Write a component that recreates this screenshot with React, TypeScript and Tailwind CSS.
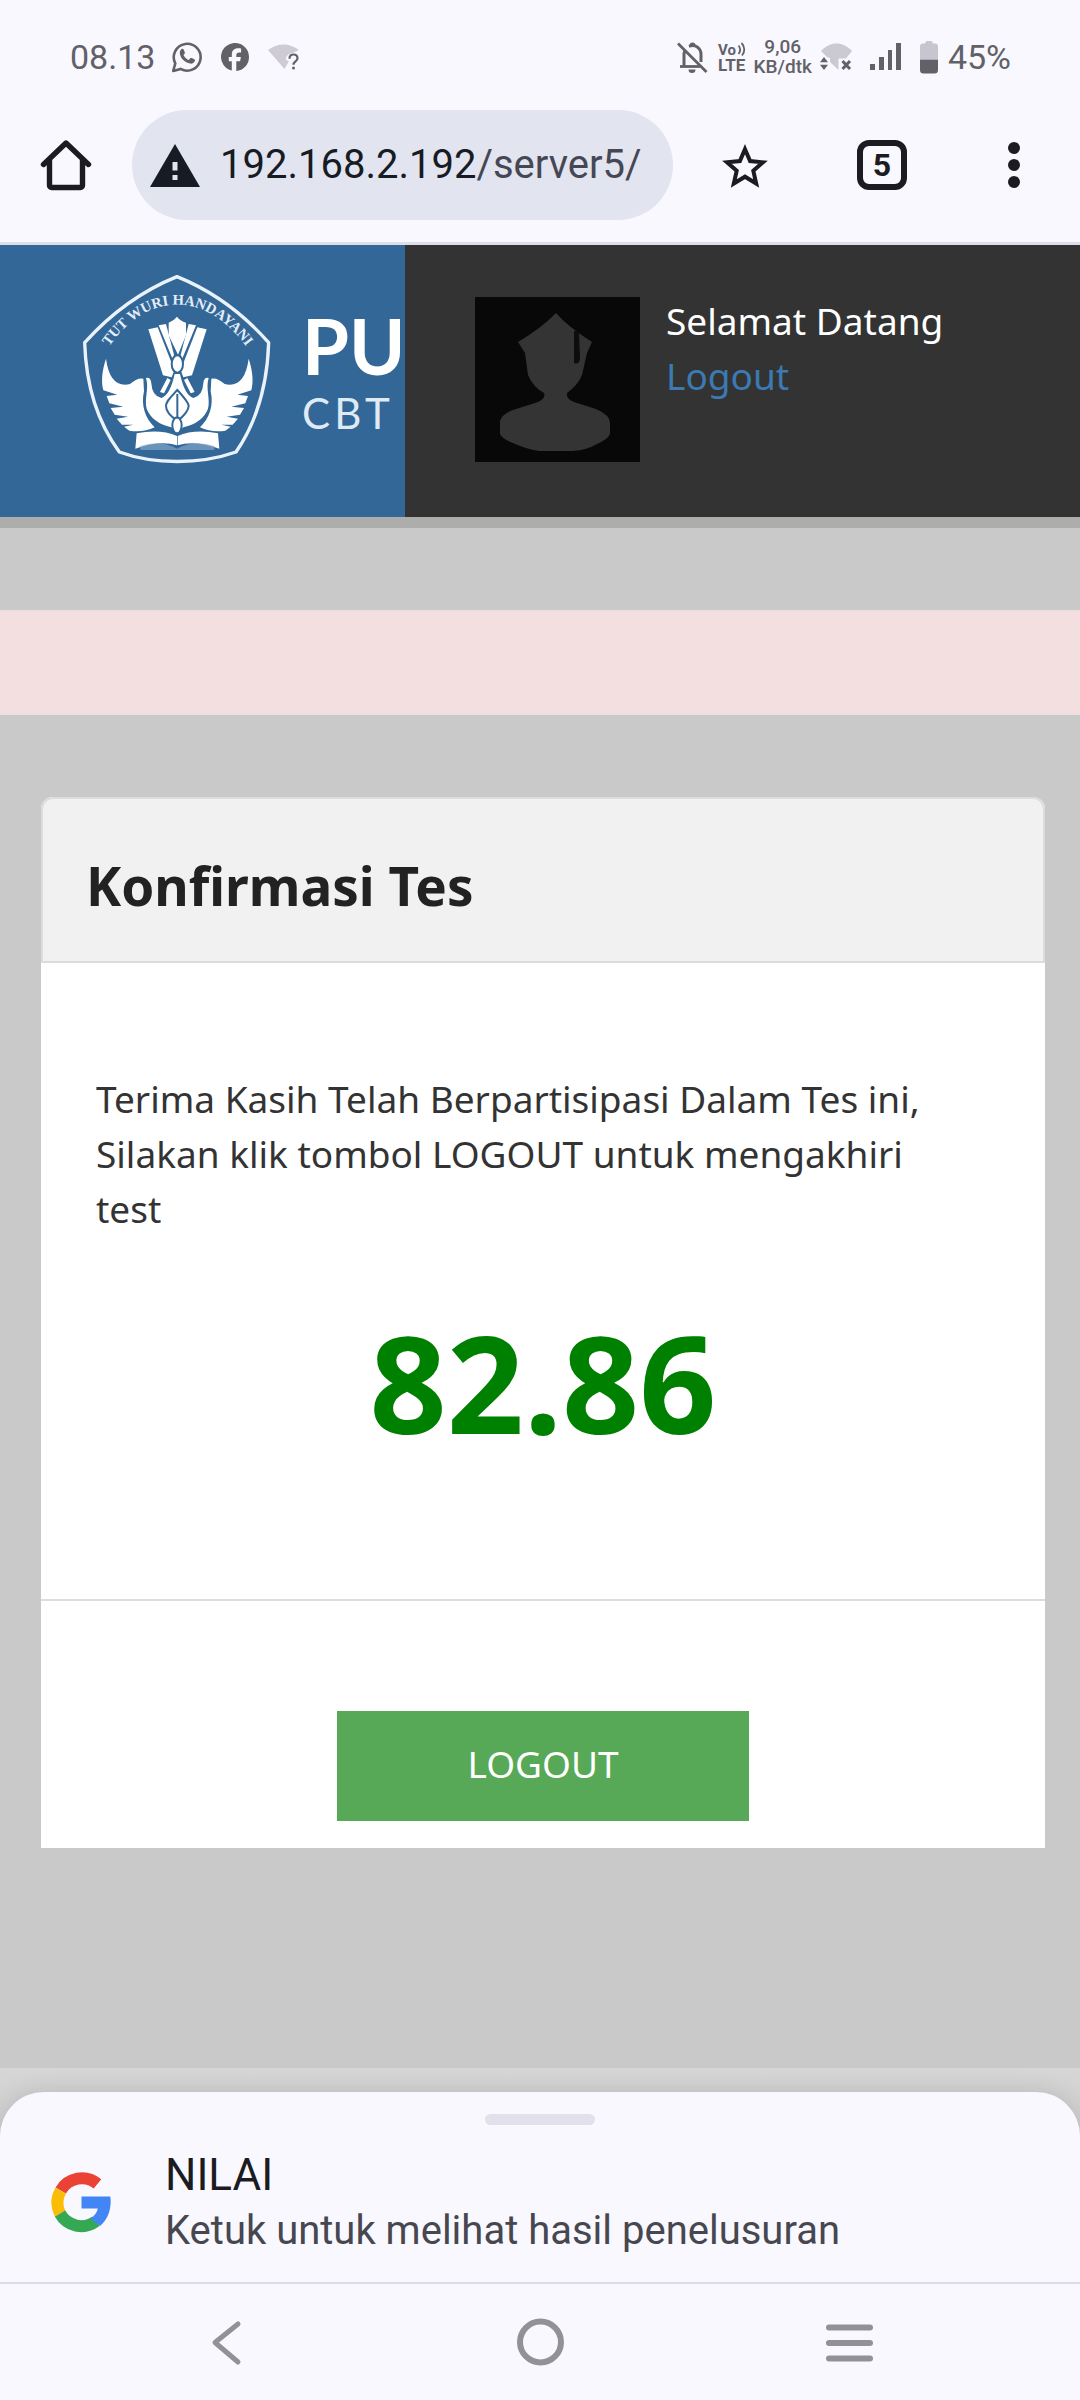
import type { ReactNode } from "react";

/* ---------- status bar icons ---------- */

function WhatsAppIcon() {
  return (
    <svg viewBox="0 0 32 32" className="size-8" fill="none" aria-label="WhatsApp">
      <path
        d="M2.2 30 L4.3 22.4 A13.4 13.4 0 1 1 9.6 27.9 Z"
        stroke="#626168"
        strokeWidth="2.6"
        strokeLinejoin="round"
      />
      <path
        d="M10.3 8.2c.6-.6 1.9-.7 2.3.2l1.2 2.9c.2.5.1 1-.2 1.4l-1.1 1.3c1.2 2.4 2.9 4 5.3 5l1.5-1.7c.3-.4.8-.5 1.3-.3l2.7 1.3c.6.3.8.8.6 1.5-.6 2.1-2.6 3.2-4.7 2.8-5.4-1-9.5-5-10.3-9.8-.3-1.9.1-3.5 1.4-4.6z"
        fill="#626168"
      />
    </svg>
  );
}

function FacebookIcon() {
  return (
    <svg viewBox="0 0 28 28" className="size-7" aria-label="Facebook">
      <path
        d="M28 14a14 14 0 1 0-17.2 13.6V18.2H7.8V14h3v-2c0-4.6 2.2-6.7 6.6-6.7.8 0 2.1.1 2.7.3v3.900h-1.8c-2.2 0-3 .8-3 2.9V14h4.6l-.8 4.2h-3.8V28A14 14 0 0 0 28 14z"
        fill="#626168"
      />
    </svg>
  );
}

function WifiUnknownIcon() {
  return (
    <svg viewBox="0 0 36 28" className="h-7 w-9" aria-label="Wi-Fi tanpa koneksi">
      <path d="M1 7C10-.5 23-.5 32 7L26 10c-4 0-7.500 3-7 7l3 1-4.500 8z" fill="#cfcbd6" />
      <path
        d="M22.500 15.800c0-2.700 1.600-4.300 4-4.300s4 1.500 4 3.700c0 3.200-4 3.300-4 6.600"
        stroke="#626168"
        strokeWidth="2.2"
        fill="none"
      />
      <circle cx="26.5" cy="25" r="1.5" fill="#626168" />
    </svg>
  );
}

function BellOffIcon() {
  return (
    <svg viewBox="0 0 32 32" className="size-8" fill="none" aria-label="Senyap">
      <path d="M8 25V13.500c0-1.300.3-2.400.8-3.500M13 5.300c6-2.300 12 1.500 12 8.200V21" stroke="#626168" strokeWidth="3" />
      <path d="M13.500 4.500a3 3 0 0 1 6 0z" fill="#626168" />
      <path d="M4 25.500H24" stroke="#626168" strokeWidth="2.8" />
      <path d="M12.500 28.500h7a3.500 3.500 0 0 1-7 0z" fill="#626168" />
      <path d="M2 2.500 30.500 31" stroke="#626168" strokeWidth="2.8" />
    </svg>
  );
}

function VolteIcon() {
  return (
    <svg viewBox="0 0 28 30" className="h-[30px] w-7 overflow-visible" aria-label="VoLTE">
      <g fontFamily="Roboto, sans-serif" fontWeight="700" fill="#626168">
        <text x="0" y="13" fontSize="15">Vo</text>
        <text x="0" y="29" fontSize="17">LTE</text>
      </g>
      <g fill="none" stroke="#626168" strokeWidth="1.8">
        <path d="M20.500 3.500c2 2.500 2 6 0 8.500" />
        <path d="M23.500 1c3.600 3.500 3.600 9 .5 12.500" />
      </g>
    </svg>
  );
}

function WifiOffIcon() {
  return (
    <svg viewBox="0 0 34 30" className="h-[30px] w-[34px]" aria-label="Wi-Fi terputus">
      <path d="M1 9C10-1 23-1 32 9l-6 7.500h-7.500V28L10 20V16L7 15z" fill="#cbc9d2" />
      <path d="M4 15l4 5.300H0zM4 28l4-5.300H0z" fill="#626168" />
      <path d="M22.500 19l7.500 8M30 19l-7.500 8" stroke="#626168" strokeWidth="3" />
    </svg>
  );
}

function SignalIcon() {
  return (
    <svg viewBox="0 0 32 28" className="h-7 w-8" fill="#626168" aria-label="Sinyal">
      <rect x="0" y="21" width="5" height="6" />
      <rect x="9" y="14" width="5" height="13" />
      <rect x="18" y="7" width="4" height="20" />
      <rect x="26" y="0" width="5" height="27" />
    </svg>
  );
}

function BatteryIcon() {
  return (
    <svg viewBox="0 0 18 34" className="h-[34px] w-[18px]" aria-label="Baterai">
      <path d="M0 19V6.500Q0 3.500 3 3.500H5Q5.500 1 7 1h4q1.500 0 2 2.500h2q3 0 3 3V19z" fill="#c7c5cf" />
      <path d="M0 19.500h18V30q0 3.500-3.500 3.500h-11Q0 33.500 0 30z" fill="#626168" />
    </svg>
  );
}

/* ---------- browser bar icons ---------- */

function HomeIcon() {
  return (
    <svg viewBox="0 0 52 52" className="size-[52px]" fill="none" stroke="#1b1b21" strokeWidth="5.4" strokeLinecap="round" strokeLinejoin="round">
      <path d="M3.500 25.500 26 4l22.500 21.500M9.500 21v25.500a2 2 0 0 0 2 2h29a2 2 0 0 0 2-2V21" />
    </svg>
  );
}

function WarningIcon() {
  return (
    <svg viewBox="0 0 50 43" className="h-[43px] w-[50px]" aria-label="Tidak aman">
      <path
        fillRule="evenodd"
        d="M25 0 50 43H0zM22.500 18v8.500h5V18zM22.500 31v5h5v-5z"
        fill="#171b24"
      />
    </svg>
  );
}

function StarIcon() {
  return (
    <svg viewBox="0 0 48 46" className="h-[46px] w-12" fill="none" stroke="#1b1b21" strokeWidth="4">
      <path d="M24 5.200 29.100 17.100 42 18.300 32.300 26.800 35.200 39.500 24 32.700 12.800 39.500 15.700 26.800 6 18.300 18.900 17.100z" />
    </svg>
  );
}

/* ---------- site graphics ---------- */

function Emblem() {
  return (
    <svg viewBox="0 0 582 582" className="size-[194px] shrink-0" aria-label="Tut Wuri Handayani">
      <defs>
        <path id="motto" d="M88 222C150 135 220 98 291 98S432 135 498 222" />
      </defs>
      <path
        d="M291 14C380 50 478 112 566 212C562 340 530 450 468 540C360 578 222 578 118 540C52 450 18 340 14 212C104 112 202 50 291 14z"
        fill="none"
        stroke="#eaf3fb"
        strokeWidth="10"
        strokeLinejoin="round"
      />
      <text fontFamily="Liberation Serif, serif" fontWeight="700" fontSize="44" fill="#e4eef8" textAnchor="middle">
        <textPath href="#motto" startOffset="50%">TUT WURI HANDAYANI</textPath>
      </text>
      <g fill="#fff">
        {/* torch bundle */}
        <path d="M205 172l28-6 50 128-8 22-26-6z" />
        <path d="M236 160l22-4 24 92-4 14z" />
        <path d="M266 152Q282 146 291 134Q300 146 318 152V190L294 248L266 190z" />
        <path d="M348 160l-22-4-24 92 4 14z" />
        <path d="M380 172l-28-6-50 128 8 22 26-6z" />
        {/* wings */}
        <path d="M78 260C68 290 62 325 70 355L112 368 80 372 88 394 130 404 92 408 104 428 144 434 110 440 126 458 160 458 132 464 148 476Q190 482 224 466C196 440 182 400 192 358L190 320Q172 316 150 336Q90 350 78 260z" />
        <path d="M506 260C516 290 522 325 514 355L472 368 504 372 496 394 454 404 492 408 480 428 440 434 474 440 458 458 424 458 452 464 436 476Q394 482 360 466C388 440 402 400 392 358L394 320Q412 316 434 336Q494 350 506 260z" />
        {/* body */}
        <path d="M198 318Q212 314 214 334Q216 372 244 378Q270 370 284 306H300Q314 370 340 378Q368 372 370 334Q372 314 386 318C376 350 392 380 384 410Q368 452 310 466L292 482L274 466Q216 452 200 410C192 380 208 350 198 318z" />
        <path d="M262 318l10 6-20 40-12-4zM322 318l-10 6 20 40 12-4z" />
        {/* open book */}
        <path d="M170 484Q240 470 291 492V520Q240 504 166 530z" />
        <path d="M414 484Q344 470 293 492V520Q344 504 418 530z" />
      </g>
      <g fill="#fff" stroke="#326798" strokeWidth="6">
        <ellipse cx="292" cy="276" rx="17" ry="26" />
        <path d="M292 354C314 378 326 392 326 402S314 432 292 446C270 432 258 416 258 402S270 378 292 354z" />
        <ellipse cx="291" cy="460" rx="14" ry="24" />
        <path d="M292 366V440" />
      </g>
      <path d="M180 522Q240 502 291 530Q344 502 404 522L402 534H182z" fill="#8fb1d1" opacity="0.6" />
    </svg>
  );
}

function Avatar() {
  return (
    <svg viewBox="0 0 165 165" className="mt-1 size-[165px] shrink-0" role="img" aria-label="Foto peserta">
      <rect width="165" height="165" fill="#080808" />
      <path
        d="M81 16Q92 29 117 45L112 56 107 78Q103 88 92 96Q91 102 99 105L121 112Q135 118 135 126V137Q133 142 122 147Q112 153 98 154H64Q48 151 38 146Q27 142 25 137V124Q27 117 38 113L63 105Q71 101 69 96Q58 90 53 78L50 56 43 45Q68 30 81 16z"
        fill="#343434"
      />
      <path d="M99 34h5l1 28q-1 6-6 4z" fill="#0d0d0d" />
    </svg>
  );
}

function GoogleLogo() {
  return (
    <svg viewBox="0 0 60 62" className="h-[62px] w-[60px]" fill="none" aria-label="Google">
      <path d="M9.700 19.600A24.500 24.500 0 0 1 46.500 12.800" stroke="#ea4335" strokeWidth="12" />
      <path d="M9 42.500A24.500 24.500 0 0 1 9.700 19.600" stroke="#fbbc05" strokeWidth="12" />
      <path d="M45 50.300A24.500 24.500 0 0 1 9 42.500" stroke="#34a853" strokeWidth="12" />
      <path d="M30.500 25.500H59.300C61 37 57 48.500 49 55L39.500 47.500C43.500 45 46 41.500 46.800 37.500H30.500z" fill="#4285f4" />
    </svg>
  );
}

/* ---------- page parts ---------- */

function StatusBar() {
  return (
    <div className="flex h-[110px] items-center justify-between pt-1 pr-[69px] pl-[70px] text-[34px] text-[#626168]">
      <div className="flex items-center">
        <span className="mr-4">08.13</span>
        <WhatsAppIcon />
        <span className="ml-[18px]"><FacebookIcon /></span>
        <span className="ml-[18px]"><WifiUnknownIcon /></span>
      </div>
      <div className="flex items-center">
        <BellOffIcon />
        <span className="ml-2.5"><VolteIcon /></span>
        <span className="ml-2 text-center text-[19px] leading-5 font-medium">
          9,06
          <br />
          KB/dtk
        </span>
        <span className="ml-2"><WifiOffIcon /></span>
        <span className="ml-4"><SignalIcon /></span>
        <span className="ml-[18px]"><BatteryIcon /></span>
        <span className="ml-2.5">45%</span>
      </div>
    </div>
  );
}

function BrowserBar() {
  return (
    <div className="flex h-[135px] items-start border-b-3 border-[#dcdfe9] pr-[60px] pl-10">
      <button type="button" aria-label="Beranda" className="flex h-[110px] items-center">
        <HomeIcon />
      </button>
      <div className="ml-10 flex h-[110px] flex-1 items-center rounded-full bg-[#e2e4f0] pl-[18px]">
        <WarningIcon />
        <a href="#server5" className="ml-5 text-[40px] text-[#454854]">
          <span className="text-[#171b24]">192.168.2.192</span>/server5/
        </a>
      </div>
      <button type="button" aria-label="Tandai" className="ml-12 flex h-[110px] items-center pt-1">
        <StarIcon />
      </button>
      <button type="button" aria-label="Tab terbuka" className="ml-[88px] flex h-[110px] items-center">
        <span className="flex size-[50px] items-center justify-center rounded-xl border-6 border-[#1b1b21] text-[32px] leading-none font-bold text-[#1b1b21]">
          5
        </span>
      </button>
      <button type="button" aria-label="Menu" className="ml-[101px] flex h-[110px] w-3 flex-col items-center justify-center gap-[5px]">
        <span className="size-3 rounded-full bg-[#1b1b21]" />
        <span className="size-3 rounded-full bg-[#1b1b21]" />
        <span className="size-3 rounded-full bg-[#1b1b21]" />
      </button>
    </div>
  );
}

function SiteHeader() {
  return (
    <header className="flex h-[283px] border-b-11 border-[#adadab] bg-[#333333]">
      <div className="flex w-3/8 overflow-hidden bg-[#326798] pt-[27px] pl-20 font-['Lato',sans-serif] text-white">
        <Emblem />
        <div className="ml-7 pt-9">
          <div className="text-[76px] leading-[76px] font-bold">PU</div>
          <div className="mt-2 text-[42px] leading-[42px] tracking-widest text-[#dfeaf5]">CBT</div>
        </div>
      </div>
      <div className="flex flex-1 gap-[26px] pt-12 pl-[70px] text-[37px] leading-[55px]">
        <Avatar />
        <div className="flex flex-col text-white">
          <span>Selamat Datang</span>
          <a href="#logout" className="text-[#3c7ab2]">Logout</a>
        </div>
      </div>
    </header>
  );
}

function ResultCard() {
  return (
    <section className="mt-[82px] mr-[35px] ml-[41px] rounded-t-xl bg-white">
      <div className="rounded-t-xl border-2 border-[#dcdcdc] bg-[#f1f1f1] px-[43px] pt-[52px] pb-10">
        <h1 className="text-[53px] leading-[70px] font-bold text-[#222222]">Konfirmasi Tes</h1>
      </div>
      <div className="border-b-2 border-[#dddddd] px-[55px] pt-[108px] pb-[117px]">
        <p className="pr-[55px] text-[37px] leading-[55px] text-[#333333]">
          Terima Kasih Telah Berpartisipasi Dalam Tes ini, Silakan klik tombol LOGOUT untuk mengakhiri test
        </p>
        <p className="mt-[46px] text-center text-[135px] leading-[200px] font-bold text-[#008000]">82.86</p>
      </div>
      <div className="flex justify-center pt-[110px] pb-[27px]">
        <button type="button" className="h-[110px] w-[412px] bg-[#57a957] pb-1 text-[37px] text-white">
          LOGOUT
        </button>
      </div>
    </section>
  );
}

function SearchSheet() {
  return (
    <div className="bg-linear-to-b from-[#d6d6d6] to-[#bdbdbd] pt-6">
      <div className="flex h-[192px] flex-col rounded-t-[44px] border-b-2 border-[#dddce5] bg-[#f9f8ff] shadow-[0_0_24px_rgba(0,0,0,0.12)]">
        <div className="mx-auto mt-[22px] h-[11px] w-[110px] rounded-full bg-[#e2e0eb]" />
        <button type="button" className="mt-5 flex items-center pl-[51px] text-left">
          <GoogleLogo />
          <span className="ml-[54px] flex flex-col pt-0.5">
            <span className="text-[44px] leading-[56px] text-[#1b1b21]">NILAI</span>
            <span className="text-[40px] leading-[56px] text-[#47474f]">Ketuk untuk melihat hasil penelusuran</span>
          </span>
        </button>
      </div>
    </div>
  );
}

function NavButton({ label, children }: { label: string; children: ReactNode }) {
  return (
    <button type="button" aria-label={label} className="flex w-[310px] items-center justify-center">
      <svg viewBox="0 0 50 50" className="size-[50px]" fill="none" stroke="#929198" strokeWidth="6" strokeLinecap="round">
        {children}
      </svg>
    </button>
  );
}

function NavBar() {
  return (
    <nav className="flex h-[116px] justify-center bg-[#f9f8ff]">
      <NavButton label="Kembali">
        <path d="M33 7 10 25.500 33 45" strokeWidth="5" strokeLinejoin="round" />
      </NavButton>
      <NavButton label="Layar utama">
        <circle cx="25.5" cy="25" r="20.5" />
      </NavButton>
      <NavButton label="Aplikasi terbaru">
        <path d="M4 10.500H45M4 26H45M4 41.500H45" />
      </NavButton>
    </nav>
  );
}

export default function App() {
  return (
    <div className="flex min-h-screen flex-col bg-[#c9c9c9] font-['Roboto',sans-serif]">
      <div className="bg-[#f9f8ff]">
        <StatusBar />
        <BrowserBar />
      </div>
      <main className="flex-1 font-['Noto_Sans',sans-serif]">
        <SiteHeader />
        <div role="alert" className="mt-[82px] h-[105px] border-y-2 border-[#eedfdf] bg-[#f4dfe0]" />
        <ResultCard />
      </main>
      <SearchSheet />
      <NavBar />
    </div>
  );
}
